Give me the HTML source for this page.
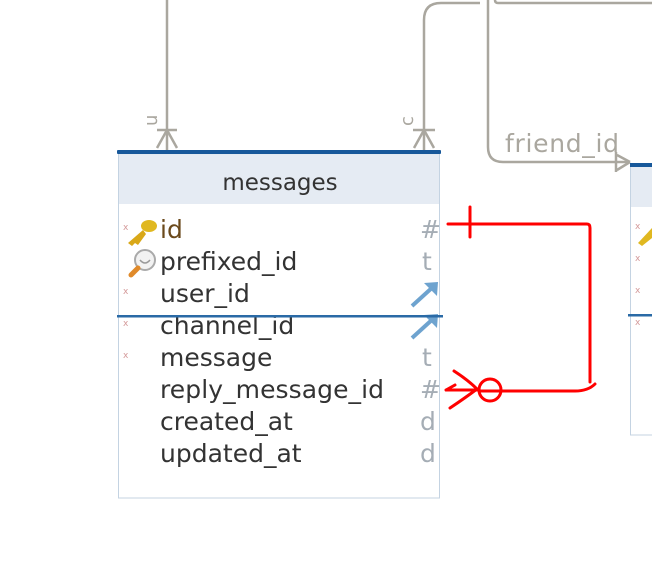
<!DOCTYPE html>
<html><head><meta charset="utf-8"><style>
html,body{margin:0;padding:0;background:#fff;width:652px;height:563px;overflow:hidden}
svg{display:block}
text{font-family:"DejaVu Sans","Liberation Sans",sans-serif}
</style></head><body>
<svg width="652" height="563" viewBox="0 0 652 563" xmlns="http://www.w3.org/2000/svg">
<g stroke="#aaa79f" stroke-width="2.5" fill="none">
<line x1="167" y1="0" x2="167" y2="150"/>
<line x1="157" y1="130" x2="177" y2="130"/>
<path d="M167 130 L157 148 M167 130 L177 148"/>
<path d="M424 150 V20 Q424 3 441 3 H480"/>
<line x1="413" y1="130" x2="435" y2="130"/>
<path d="M424 130 L414 148 M424 130 L434 148"/>
<path d="M488 0 V147 Q488 162 503 162 H630"/>
<path d="M616 152 V172 M630 162 L617 155 M630 162 L617 170"/>
<path d="M495 0 Q495 3 498 3 H652"/>
</g>
<text x="0" y="0" font-size="18" fill="#aaa79f" transform="translate(157 126) rotate(-90)">u</text>
<text x="0" y="0" font-size="18" fill="#aaa79f" transform="translate(413 126) rotate(-90)">c</text>
<text x="505" y="152" font-size="25" fill="#aaa79f" textLength="114">friend_id</text>
<rect x="118.5" y="154" width="321" height="344" fill="#fff" stroke="#c4d3e2"/>
<rect x="119" y="155" width="320" height="49" fill="#e5ebf3"/>
<rect x="117" y="150" width="324" height="4" fill="#17589a" rx="1"/>
<text x="280" y="190" font-size="23" fill="#333" text-anchor="middle">messages</text>
<g font-size="25" fill="#333">
<text x="160" y="238" fill="#6b4a1c">id</text>
<text x="160" y="270">prefixed_id</text>
<text x="160" y="302">user_id</text>
<text x="160" y="334">channel_id</text>
<text x="160" y="366">message</text>
<text x="160" y="398" textLength="224">reply_message_id</text>
<text x="160" y="430">created_at</text>
<text x="160" y="462">updated_at</text>
</g>
<g font-size="25" fill="#a5adb5">
<text x="420" y="238">#</text>
<text x="422" y="270">t</text>
<text x="422" y="366">t</text>
<text x="420" y="398">#</text>
<text x="420" y="430">d</text>
<text x="420" y="462">d</text>
</g>
<g fill="#d49a9a" font-size="9">
<text x="123" y="230">x</text><text x="123" y="294">x</text><text x="123" y="326">x</text><text x="123" y="358">x</text>
</g>
<g>
<ellipse cx="149" cy="226" rx="8" ry="6" fill="#e0b820"/>
<path d="M143 230 L128 243 L132 246 L135 243 L138 245 L146 234Z" fill="#d9a818"/>
</g>
<circle cx="145" cy="260" r="10" fill="#f2f2f2" stroke="#aaa" stroke-width="2"/>
<path d="M140 260 q5 6 10 0" stroke="#999" fill="none" stroke-width="1.5"/>
<path d="M138 268 L131 275" stroke="#e08a2a" stroke-width="5" stroke-linecap="round"/>
<g stroke="#6ea3cf" stroke-width="4" fill="none">
<path d="M412 306 L434 286"/><path d="M412 338 L434 318"/>
</g>
<path d="M424 283 L438 282 L437 296Z" fill="#6ea3cf"/>
<path d="M424 315 L438 314 L437 328Z" fill="#6ea3cf"/>
<rect x="117" y="315" width="326" height="2.5" fill="#2a6aa6"/>
<rect x="630.5" y="166" width="30" height="269" fill="#fff" stroke="#c4d3e2"/>
<rect x="631" y="167" width="30" height="40" fill="#e5ebf3"/>
<rect x="630" y="163" width="30" height="4" fill="#17589a"/>
<rect x="628" y="314" width="30" height="2.5" fill="#2a6aa6"/>
<g fill="#d49a9a" font-size="9"><text x="635" y="229">x</text><text x="635" y="261">x</text><text x="635" y="293">x</text><text x="635" y="325">x</text></g>
<path d="M638 243 L652 228 L652 238 L642 246Z" fill="#e0b820"/>
<g stroke="#f00" stroke-width="3" fill="none" stroke-linecap="round">
<path d="M448 224 H587 Q590 224 590 228 V382"/>
<path d="M470 207 V237"/>
<path d="M480 391 H575 Q588 391 595 384"/>
<circle cx="490" cy="390" r="11"/>
<path d="M454 371 Q468 380 477 389 Q465 398 450 408"/>
<path d="M446 390 H478 M455 385 L446 390"/>
</g>
</svg>
</body></html>
